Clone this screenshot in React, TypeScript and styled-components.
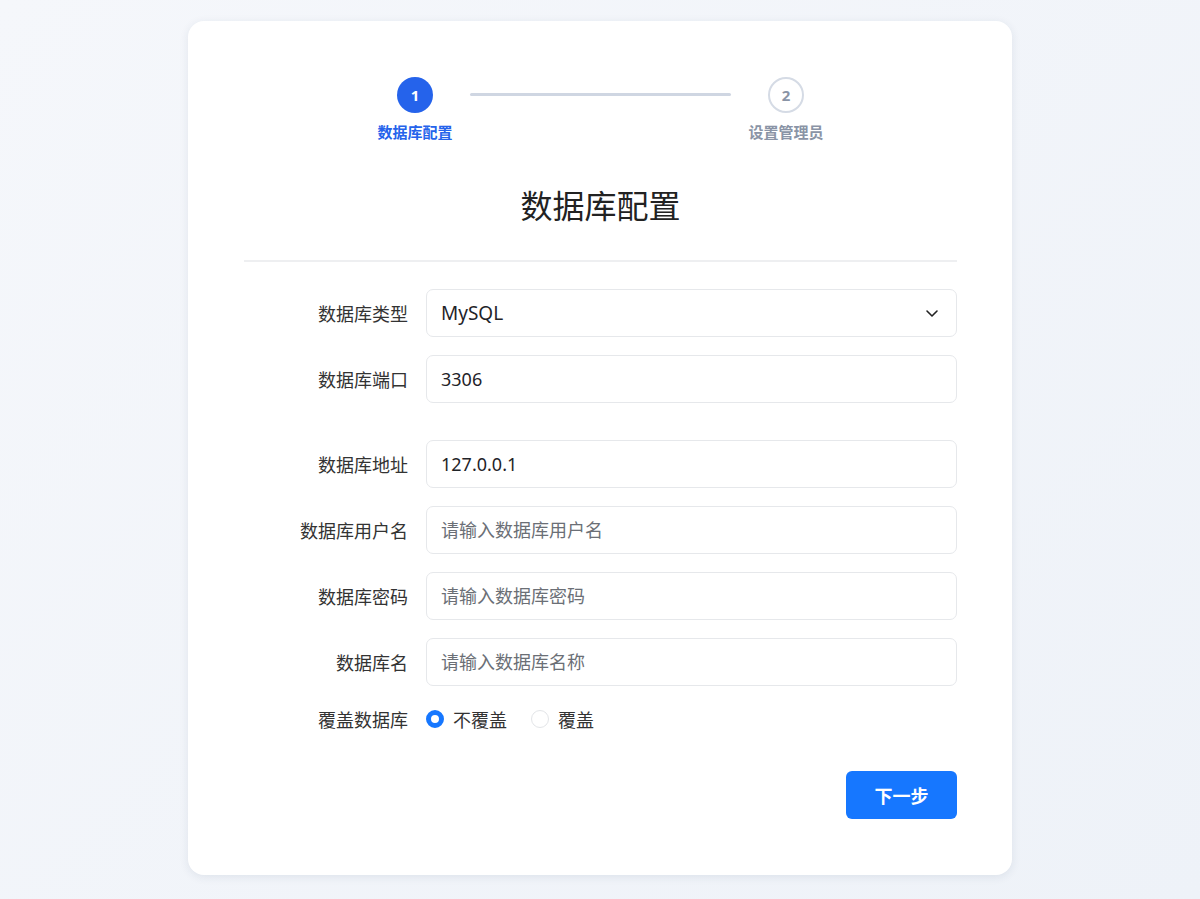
import styled, { createGlobalStyle } from 'styled-components';

const GlobalStyle = createGlobalStyle`
    html, body {
        margin: 0;
        padding: 0;
    }
    body {
        font-family: 'Noto Sans', 'Noto Sans CJK SC', sans-serif;
        background: linear-gradient(135deg, #f5f7fb 0%, #eef2f8 100%);
        min-height: 899px;
    }
`;

const STEPS = ['数据库配置', '设置管理员'];

const App = () => {
    return (
        <>
            <GlobalStyle />
            <Page>
                <Card>
                    <Stepper>
                        <Step>
                            <StepCircle $active>1</StepCircle>
                            <StepLabel $active>{STEPS[0]}</StepLabel>
                        </Step>
                        <StepLine />
                        <Step>
                            <StepCircle>2</StepCircle>
                            <StepLabel>{STEPS[1]}</StepLabel>
                        </Step>
                    </Stepper>

                    <Title>数据库配置</Title>
                    <Divider />

                    <Form>
                        <Row>
                            <Label>数据库类型</Label>
                            <SelectBox>
                                <span>MySQL</span>
                                <svg width="16" height="16" viewBox="0 0 16 16" fill="none">
                                    <path d="M3 6l5 5 5-5" stroke="#222" strokeWidth="1.6" strokeLinecap="round" strokeLinejoin="round" />
                                </svg>
                            </SelectBox>
                        </Row>
                        <Row>
                            <Label>数据库端口</Label>
                            <Input defaultValue="3306" />
                        </Row>
                        <Row $spaced>
                            <Label>数据库地址</Label>
                            <Input defaultValue="127.0.0.1" />
                        </Row>
                        <Row>
                            <Label>数据库用户名</Label>
                            <Input placeholder="请输入数据库用户名" />
                        </Row>
                        <Row>
                            <Label>数据库密码</Label>
                            <Input placeholder="请输入数据库密码" />
                        </Row>
                        <Row>
                            <Label>数据库名</Label>
                            <Input placeholder="请输入数据库名称" />
                        </Row>
                        <RadioRow>
                            <Label>覆盖数据库</Label>
                            <RadioGroup>
                                <RadioOption>
                                    <RadioDot $checked />
                                    不覆盖
                                </RadioOption>
                                <RadioOption>
                                    <RadioDot />
                                    覆盖
                                </RadioOption>
                            </RadioGroup>
                        </RadioRow>
                    </Form>

                    <Footer>
                        <NextButton>下一步</NextButton>
                    </Footer>
                </Card>
            </Page>
        </>
    );
};

const Page = styled.div`
    display: flex;
    justify-content: center;
    padding-top: 21px;
`;

const Card = styled.div`
    width: 824px;
    height: 854px;
    box-sizing: border-box;
    background: #fff;
    border-radius: 16px;
    box-shadow: 0 2px 10px rgba(30, 50, 90, 0.09);
    padding: 56px 55px 0 56px;
`;

const Stepper = styled.div`
    display: flex;
    align-items: flex-start;
    justify-content: center;
`;

const Step = styled.div`
    width: 90px;
    display: flex;
    flex-direction: column;
    align-items: center;
`;

const StepCircle = styled.div<{ $active?: boolean }>`
    width: 36px;
    height: 36px;
    box-sizing: border-box;
    border-radius: 50%;
    display: flex;
    align-items: center;
    justify-content: center;
    font-size: 15px;
    font-weight: 700;
    background: ${({ $active }) => ($active ? '#2563eb' : '#fff')};
    color: ${({ $active }) => ($active ? '#fff' : '#8a94a6')};
    border: ${({ $active }) => ($active ? 'none' : '2px solid #d5dbe5')};
`;

const StepLabel = styled.div<{ $active?: boolean }>`
    margin-top: 9px;
    font-size: 15px;
    font-weight: 700;
    line-height: 21px;
    white-space: nowrap;
    color: ${({ $active }) => ($active ? '#2563eb' : '#8a94a6')};
`;

const StepLine = styled.div`
    width: 261px;
    height: 3px;
    margin: 16px 10px 0;
    border-radius: 2px;
    background: #cfd6e2;
`;

const Title = styled.h1`
    margin: 40px 0 0;
    text-align: center;
    font-size: 32px;
    font-weight: 400;
    line-height: 46px;
    color: #222;
`;

const Divider = styled.div`
    height: 2px;
    margin-top: 31px;
    background: #eeeff1;
`;

const Form = styled.div`
    display: flex;
    flex-direction: column;
    gap: 18px;
    margin-top: 27px;
`;

const Row = styled.div<{ $spaced?: boolean }>`
    display: grid;
    grid-template-columns: 164px 1fr;
    column-gap: 18px;
    align-items: center;
    margin-top: ${({ $spaced }) => ($spaced ? '19px' : '0')};
`;

const RadioRow = styled(Row)`
    height: 30px;
`;

const Label = styled.label`
    text-align: right;
    font-size: 18px;
    color: #333;
`;

const fieldBase = `
    height: 48px;
    box-sizing: border-box;
    border: 1px solid #e6e8eb;
    border-radius: 7px;
    padding: 0 14px;
    font-family: 'Noto Sans', 'Noto Sans CJK SC', sans-serif;
    font-size: 18px;
    color: #1f2328;
    background: #fff;
`;

const Input = styled.input`
    ${fieldBase}
    width: 100%;
    outline: none;
    &::placeholder {
        color: #6b6f76;
    }
`;

const SelectBox = styled.div`
    ${fieldBase}
    display: flex;
    align-items: center;
    justify-content: space-between;
    padding-right: 16px;
    font-size: 19px;
`;

const RadioGroup = styled.div`
    display: flex;
    align-items: center;
    gap: 24px;
`;

const RadioOption = styled.div`
    display: flex;
    align-items: center;
    gap: 9px;
    font-size: 18px;
    color: #333;
`;

const RadioDot = styled.span<{ $checked?: boolean }>`
    width: 18px;
    height: 18px;
    box-sizing: border-box;
    border-radius: 50%;
    border: ${({ $checked }) => ($checked ? '5px solid #1677ff' : '1px solid #e3e5e8')};
    background: #fff;
`;

const Footer = styled.div`
    display: flex;
    justify-content: flex-end;
    margin-top: 37px;
`;

const NextButton = styled.button`
    width: 111px;
    height: 48px;
    border: none;
    border-radius: 6px;
    background: #1677ff;
    color: #fff;
    font-family: 'Noto Sans', 'Noto Sans CJK SC', sans-serif;
    font-size: 18px;
    font-weight: 700;
`;

export default App;
